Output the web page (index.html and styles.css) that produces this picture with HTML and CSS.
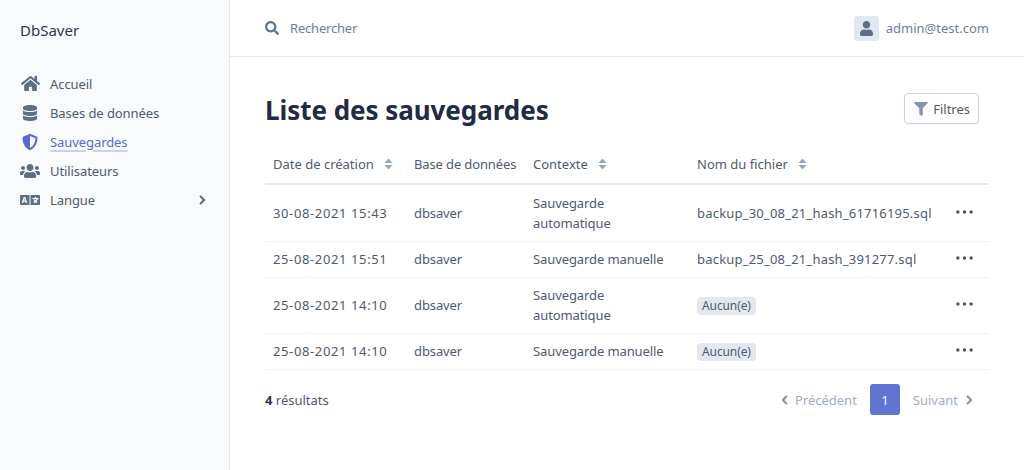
FILE: index.html
```html
<!DOCTYPE html>
<html lang="fr">
<head>
<meta charset="utf-8">
<title>DbSaver</title>
<link rel="stylesheet" href="styles.css">
</head>
<body>
<div class="app">
  <aside class="sidebar">
    <div class="brand">DbSaver</div>
    <nav class="nav">
      <a class="nav-item"><span class="nav-icon"><svg class="ic-home" viewBox="0 0 576 512"><path d="M280.37 148.26L96 300.11V464a16 16 0 0 0 16 16l112.06-.29a16 16 0 0 0 15.92-16V368a16 16 0 0 1 16-16h64a16 16 0 0 1 16 16v95.64a16 16 0 0 0 16 16.05L464 480a16 16 0 0 0 16-16V300L295.67 148.26a12.19 12.19 0 0 0-15.3 0zM571.6 251.47L488 182.56V44.05a12 12 0 0 0-12-12h-56a12 12 0 0 0-12 12v72.61L318.47 43a48 48 0 0 0-61 0L4.34 251.47a12 12 0 0 0-1.6 16.9l25.5 31A12 12 0 0 0 45.15 301l235.22-193.74a12.19 12.19 0 0 1 15.3 0L530.9 301a12 12 0 0 0 16.9-1.6l25.5-31a12 12 0 0 0-1.7-16.93z"/></svg></span>Accueil</a>
      <a class="nav-item"><span class="nav-icon"><svg class="ic-db" viewBox="0 0 448 512"><path d="M448 73.143v45.714C448 159.143 347.667 192 224 192S0 159.143 0 118.857V73.143C0 32.857 100.333 0 224 0s224 32.857 224 73.143zM448 176v102.857C448 319.143 347.667 352 224 352S0 319.143 0 278.857V176c48.125 33.143 136.208 48.572 224 48.572S399.874 209.143 448 176zm0 160v102.857C448 479.143 347.667 512 224 512S0 479.143 0 438.857V336c48.125 33.143 136.208 48.572 224 48.572S399.874 369.143 448 336z"/></svg></span>Bases de données</a>
      <a class="nav-item active"><span class="nav-icon"><svg class="ic-shield" viewBox="0 0 512 512"><path d="M466.5 83.7l-192-80a48.15 48.15 0 0 0-36.9 0l-192 80C27.7 91.1 16 108.6 16 128c0 198.5 114.5 335.7 221.5 380.3 11.8 4.9 25.1 4.9 36.9 0C360.1 472.6 496 349.3 496 128c0-19.4-11.7-36.9-29.5-44.3zM256.1 446.3l-.1-381 175.9 73.3c-3.3 151.4-82.1 261.1-175.8 307.7z"/></svg></span><span class="nav-label">Sauvegardes</span></a>
      <a class="nav-item"><span class="nav-icon"><svg class="ic-users" viewBox="0 0 640 512"><path d="M96 224c35.3 0 64-28.7 64-64s-28.7-64-64-64-64 28.7-64 64 28.7 64 64 64zm448 0c35.3 0 64-28.7 64-64s-28.7-64-64-64-64 28.7-64 64 28.7 64 64 64zm32 32h-64c-17.6 0-33.5 7.1-45.1 18.6 40.3 22.1 68.9 62 75.1 109.4h66c17.7 0 32-14.3 32-32v-32c0-35.3-28.7-64-64-64zm-256 0c61.9 0 112-50.1 112-112S381.9 32 320 32 208 82.1 208 144s50.1 112 112 112zm76.8 32h-8.3c-20.8 10-43.9 16-68.5 16s-47.6-6-68.5-16h-8.3C179.6 288 128 339.6 128 403.2V432c0 26.5 21.5 48 48 48h288c26.5 0 48-21.5 48-48v-28.8c0-63.6-51.6-115.2-115.2-115.2zm-223.7-13.4C161.5 263.1 145.6 256 128 256H64c-35.3 0-64 28.7-64 64v32c0 17.7 14.3 32 32 32h65.9c6.3-47.4 34.9-87.3 75.2-109.4z"/></svg></span>Utilisateurs</a>
      <a class="nav-item"><span class="nav-icon"><svg class="ic-users" viewBox="0 0 640 512"><path d="M152.1 236.2c-3.5-12.1-7.8-33.2-7.8-33.2h-.5s-4.3 21.1-7.8 33.2l-11.1 37.5H163zM616 96H336v320h280c13.3 0 24-10.7 24-24V120c0-13.3-10.7-24-24-24zm-24 120c0 6.6-5.4 12-12 12h-11.4c-6.9 23.6-21.7 47.4-42.7 69.9 8.4 6.4 17.1 12.5 26.1 18 5.5 3.4 7.3 10.5 4.1 16.2l-7.9 13.9c-3.4 5.9-10.9 7.8-16.7 4.3-12.6-7.8-24.5-16.1-35.4-24.9-10.9 8.7-22.7 17.1-35.4 24.9-5.8 3.5-13.3 1.6-16.7-4.3l-7.9-13.9c-3.2-5.6-1.4-12.8 4.2-16.2 9.3-5.7 18-11.7 26.1-18-7.9-8.4-14.9-17-21-25.7-4-5.7-2.2-13.6 3.7-17.1l6.5-3.9 7.3-4.3c5.4-3.2 12.4-1.7 16 3.4 5 7 10.8 14 17.4 20.9 13.5-14.2 23.8-28.9 30-43.2H412c-6.6 0-12-5.4-12-12v-16c0-6.6 5.4-12 12-12h64v-16c0-6.6 5.4-12 12-12h16c6.6 0 12 5.4 12 12v16h64c6.6 0 12 5.4 12 12zM0 120v272c0 13.3 10.7 24 24 24h280V96H24c-13.3 0-24 10.7-24 24zm58.9 216.1L116.4 167c1.7-4.9 6.2-8.1 11.4-8.1h32.5c5.1 0 9.7 3.3 11.4 8.1l57.5 169.1c2.6 7.8-3.1 15.9-11.4 15.9h-22.9a12 12 0 0 1-11.5-8.6l-9.4-31.9h-60.2l-9.1 31.8c-1.5 5.1-6.2 8.7-11.5 8.7H70.3c-8.2 0-14-8.1-11.4-15.9z"/></svg></span>Langue<svg class="chev nav-chevron" viewBox="0 0 320 512"><path d="M285.476 272.971L91.132 467.314c-9.373 9.373-24.569 9.373-33.941 0l-22.667-22.667c-9.357-9.357-9.375-24.522-.04-33.901L188.505 256 34.484 101.255c-9.335-9.379-9.317-24.544.04-33.901l22.667-22.667c9.373-9.373 24.569-9.373 33.941 0L285.475 239.03c9.373 9.372 9.373 24.568.001 33.941z"/></svg></a>
    </nav>
  </aside>
  <div class="main">
    <header class="topbar">
      <div class="search">
        <svg class="search-icon" viewBox="0 0 512 512"><path d="M505 442.7L405.3 343c-4.5-4.5-10.6-7-17-7H372c27.6-35.3 44-79.7 44-128C416 93.1 322.9 0 208 0S0 93.1 0 208s93.1 208 208 208c48.3 0 92.7-16.4 128-44v16.3c0 6.4 2.5 12.5 7 17l99.7 99.7c9.4 9.4 24.6 9.4 33.9 0l28.3-28.3c9.4-9.4 9.4-24.6.1-34zM208 336c-70.7 0-128-57.2-128-128 0-70.7 57.2-128 128-128 70.7 0 128 57.2 128 128 0 70.7-57.2 128-128 128z"/></svg>
        <span>Rechercher</span>
      </div>
      <div class="user">
        <span class="avatar"><svg viewBox="0 0 448 512"><path d="M224 256c70.7 0 128-57.3 128-128S294.7 0 224 0 96 57.3 96 128s57.3 128 128 128zm89.6 32h-16.7c-22.2 10.2-46.9 16-72.9 16s-50.6-5.8-72.9-16h-16.7C60.2 288 0 348.2 0 422.4V464c0 26.5 21.5 48 48 48h352c26.5 0 48-21.5 48-48v-41.6c0-74.2-60.2-134.4-134.4-134.4z"/></svg></span>
        <span>admin@test.com</span>
      </div>
    </header>
    <main class="content">
      <div class="head">
        <h1>Liste des sauvegardes</h1>
        <button class="filter-btn"><svg viewBox="0 0 512 512"><path d="M487.976 0H24.028C2.71 0-8.047 25.866 7.058 40.971L192 225.941V432c0 7.831 3.821 15.17 10.237 19.662l80 55.98C298.02 518.69 320 507.493 320 487.98V225.941l184.947-184.97C520.021 25.896 509.338 0 487.976 0z"/></svg>Filtres</button>
      </div>
      <table class="table">
        <colgroup><col class="c1"><col class="c2"><col class="c3"><col class="c4"><col class="c5"></colgroup>
        <thead>
          <tr>
            <th>Date de création<svg class="sort" viewBox="0 0 10 12"><path d="M5 0l4.5 5h-9z"/><path d="M5 12L.5 7h9z"/></svg></th>
            <th class="tight">Base de données</th>
            <th>Contexte<svg class="sort" viewBox="0 0 10 12"><path d="M5 0l4.5 5h-9z"/><path d="M5 12L.5 7h9z"/></svg></th>
            <th>Nom du fichier<svg class="sort" viewBox="0 0 10 12"><path d="M5 0l4.5 5h-9z"/><path d="M5 12L.5 7h9z"/></svg></th>
            <th></th>
          </tr>
        </thead>
        <tbody>
          <tr>
            <td class="date">30-08-2021 15:43</td><td>dbsaver</td><td>Sauvegarde<br>automatique</td><td class="file">backup_30_08_21_hash_61716195.sql</td>
            <td class="act"><svg class="dots" viewBox="0 0 18 4"><circle cx="2" cy="2" r="1.8"/><circle cx="9" cy="2" r="1.8"/><circle cx="16" cy="2" r="1.8"/></svg></td>
          </tr>
          <tr>
            <td class="date">25-08-2021 15:51</td><td>dbsaver</td><td>Sauvegarde manuelle</td><td class="file">backup_25_08_21_hash_391277.sql</td>
            <td class="act"><svg class="dots" viewBox="0 0 18 4"><circle cx="2" cy="2" r="1.8"/><circle cx="9" cy="2" r="1.8"/><circle cx="16" cy="2" r="1.8"/></svg></td>
          </tr>
          <tr>
            <td class="date">25-08-2021 14:10</td><td>dbsaver</td><td>Sauvegarde<br>automatique</td><td><span class="badge">Aucun(e)</span></td>
            <td class="act"><svg class="dots" viewBox="0 0 18 4"><circle cx="2" cy="2" r="1.8"/><circle cx="9" cy="2" r="1.8"/><circle cx="16" cy="2" r="1.8"/></svg></td>
          </tr>
          <tr>
            <td class="date">25-08-2021 14:10</td><td>dbsaver</td><td>Sauvegarde manuelle</td><td><span class="badge">Aucun(e)</span></td>
            <td class="act"><svg class="dots" viewBox="0 0 18 4"><circle cx="2" cy="2" r="1.8"/><circle cx="9" cy="2" r="1.8"/><circle cx="16" cy="2" r="1.8"/></svg></td>
          </tr>
        </tbody>
      </table>
      <div class="foot">
        <div class="count"><strong>4</strong> résultats</div>
        <div class="pager">
          <span class="page-link prev"><svg class="chev" viewBox="0 0 320 512"><path d="M34.52 239.03L228.87 44.69c9.37-9.37 24.57-9.37 33.94 0l22.67 22.67c9.36 9.36 9.37 24.52.04 33.9L131.49 256l154.02 154.75c9.34 9.38 9.32 24.54-.04 33.9l-22.67 22.67c-9.37 9.37-24.57 9.37-33.94 0L34.52 272.97c-9.37-9.37-9.37-24.57 0-33.94z"/></svg>Précédent</span>
          <span class="page-current">1</span>
          <span class="page-link">Suivant<svg class="chev" viewBox="0 0 320 512"><path d="M285.476 272.971L91.132 467.314c-9.373 9.373-24.569 9.373-33.941 0l-22.667-22.667c-9.357-9.357-9.375-24.522-.04-33.901L188.505 256 34.484 101.255c-9.335-9.379-9.317-24.544.04-33.901l22.667-22.667c9.373-9.373 24.569-9.373 33.941 0L285.475 239.03c9.373 9.372 9.373 24.568.001 33.941z"/></svg></span>
        </div>
      </div>
    </main>
  </div>
</div>
</body>
</html>
```
FILE: styles.css
```css
* { box-sizing: border-box; }
html, body { margin: 0; height: 100%; }
body {
  font-family: "Noto Sans", "Open Sans", sans-serif;
  font-size: 13px;
  line-height: 20px;
  color: #4f5a6d;
  background: #fff;
  overflow: hidden;
}
.app { display: flex; height: 470px; }
.sidebar {
  width: 230px;
  flex: none;
  background: #f9fafc;
  border-right: 1px solid #e2e8f0;
  padding: 20px;
}
.brand { font-size: 15px; color: #2d3748; height: 20px; }
.nav { margin-top: 29px; display: flex; flex-direction: column; }
.nav-item {
  display: flex;
  align-items: center;
  height: 29px;
  letter-spacing: -.08px;
}
.nav-icon {
  width: 30px;
  flex: none;
  display: flex;
  align-items: center;
  fill: #5e6e85;
}
.nav-icon svg { display: block; }
.ic-home { width: 19px; height: 17px; margin-left: 1px; }
.ic-db { width: 14px; height: 16px; margin-left: 3px; }
.ic-shield { width: 16px; height: 16px; margin-left: 2px; }
.ic-users { width: 20px; height: 16px; }
.nav-item.active { color: #5a67d8; }
.nav-item.active .nav-icon { fill: #5a67d8; }
.nav-label {
  text-decoration: underline 2px #c8d1f5;
  text-underline-offset: 3px;
}
.chev { width: 7px; height: 10px; stroke-width: 40; stroke-linejoin: round; }
.nav-chevron { margin-left: auto; margin-right: 3px; fill: #5e6e85; stroke: #5e6e85; }
.main { flex: 1; min-width: 0; display: flex; flex-direction: column; }
.topbar {
  height: 57px;
  flex: none;
  border-bottom: 1px solid #e2e8f0;
  display: flex;
  align-items: center;
  justify-content: space-between;
  padding: 0 35px;
}
.search { display: flex; align-items: center; gap: 11px; color: #718096; letter-spacing: -.2px; }
.search-icon { width: 14px; height: 14px; fill: #5e7390; }
.user { display: flex; align-items: center; gap: 7px; color: #718096; }
.avatar {
  width: 25px;
  height: 25px;
  border-radius: 3px;
  background: #e2e8f0;
  display: flex;
  align-items: center;
  justify-content: center;
}
.avatar svg { width: 13px; height: 15px; fill: #5e6e85; }
.content { padding: 36px 35px 0; }
.head { display: flex; align-items: flex-start; justify-content: space-between; }
h1 { margin: 0; font-size: 26px; line-height: 34px; font-weight: 700; color: #222b45; letter-spacing: -.05px; }
.filter-btn {
  display: flex;
  align-items: center;
  gap: 5px;
  height: 31px;
  padding: 0 8px 0 9px;
  margin-right: 10px;
  font: inherit;
  color: #4f5a6d;
  background: #fff;
  border: 1px solid #cbd5e0;
  border-radius: 4px;
  box-shadow: 0 1px 2px rgba(0, 0, 0, .05);
}
.filter-btn svg { width: 14px; height: 14px; fill: #8795a8; }
.table { width: 100%; margin-top: 16px; border-collapse: separate; border-spacing: 0; table-layout: fixed; }
.c1 { width: 141px; }
.c2 { width: 119px; }
.c3 { width: 164px; }
.c4 { width: 251px; }
.table th {
  text-align: left;
  font-weight: 400;
  padding: 11px 8px 9px;
  border-bottom: 2px solid #e2e8f0;
  white-space: nowrap;
}
.table th.tight { letter-spacing: -.13px; }
.table td {
  padding: 7px 8px 8px;
  border-bottom: 1px solid #edf2f7;
  white-space: nowrap;
  letter-spacing: -.1px;
}
.table tbody tr:first-child td { padding-top: 8px; }
.table td.date { letter-spacing: .62px; }
.table td.file { letter-spacing: .2px; }
.sort { width: 9px; height: 12px; margin-left: 10px; vertical-align: -1px; fill: #98a5c0; }
.table .act { text-align: right; }
.dots { width: 17px; height: 4px; display: inline-block; vertical-align: 4px; margin-right: 8px; fill: #4a5568; }
.badge {
  display: inline-block;
  background: #e2e8f0;
  border-radius: 4px;
  padding: 0 5px;
  font-size: 12px;
  line-height: 18px;
}
.foot { display: flex; align-items: center; justify-content: space-between; margin-top: 14px; }
.count strong { color: #2d3748; }
.pager { display: flex; align-items: center; gap: 13px; margin-right: 16px; color: #a0aec0; }
.page-link { display: flex; align-items: center; gap: 8px; }
.page-link.prev { gap: 7px; }
.page-link svg { fill: #8795a8; stroke: #8795a8; }
.page-current {
  width: 30px;
  height: 31px;
  border-radius: 3px;
  background: #6075d2;
  color: #fff;
  display: flex;
  align-items: center;
  justify-content: center;
}
```
